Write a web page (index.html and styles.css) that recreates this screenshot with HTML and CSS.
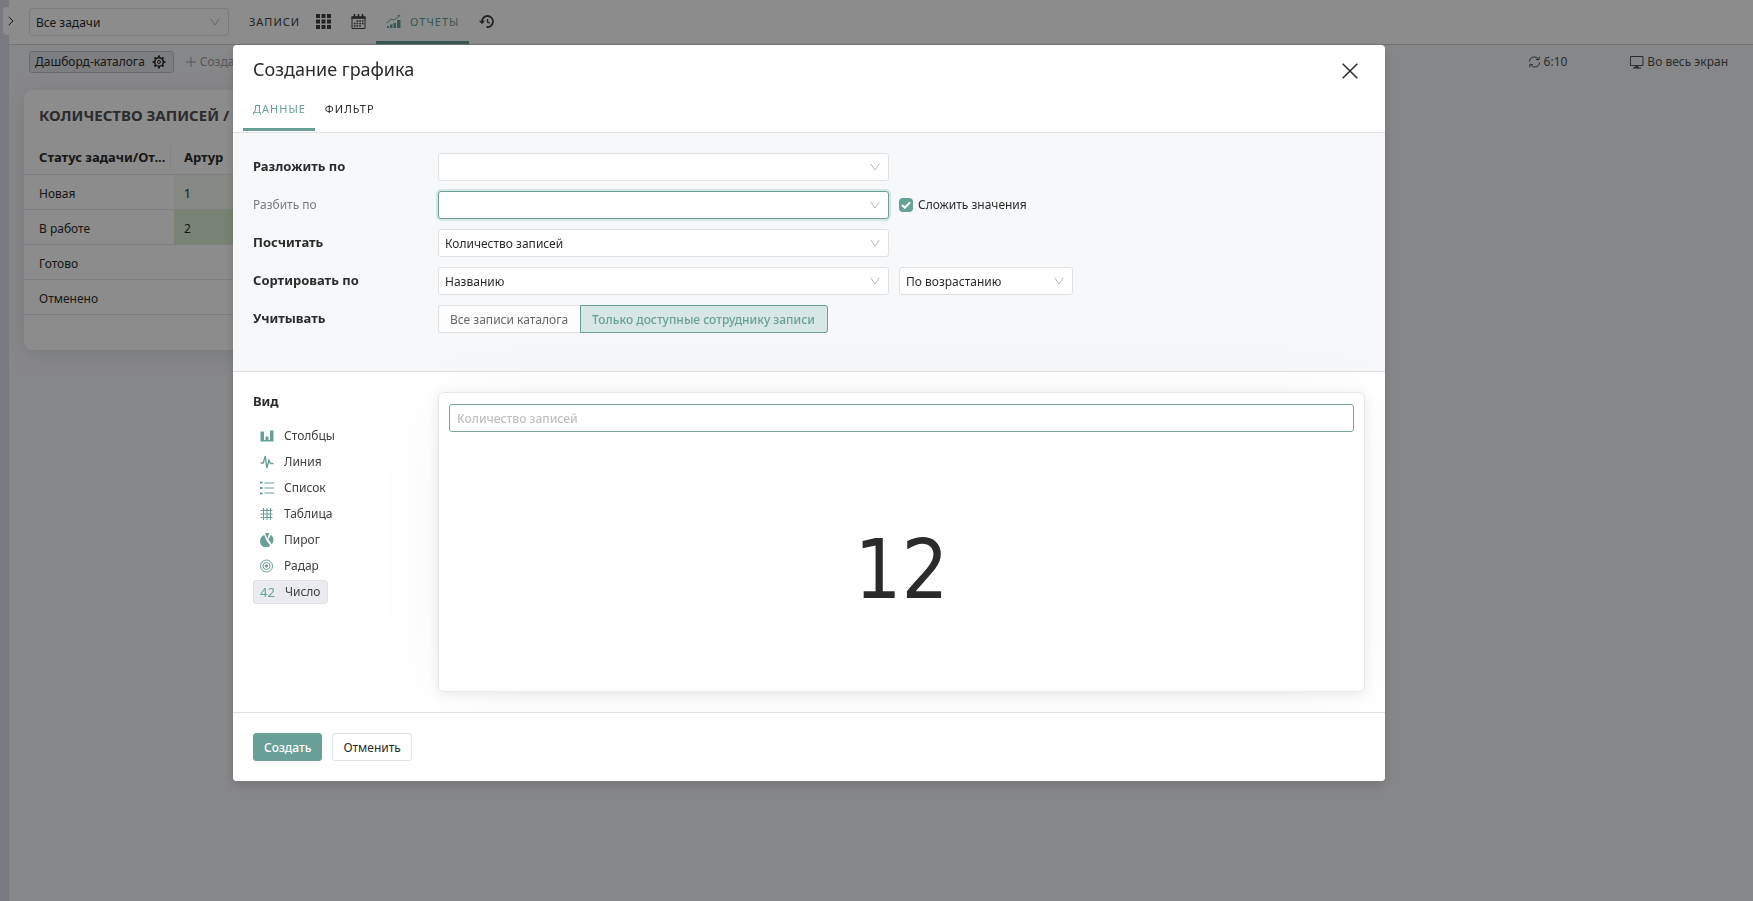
FILE: index.html
```html
<!DOCTYPE html>
<html lang="ru">
<head>
<meta charset="utf-8">
<title>Создание графика</title>
<link rel="stylesheet" href="styles.css">
</head>
<body>
<svg class="symbols" aria-hidden="true">
  <symbol id="chevron" viewBox="0 0 10 8"><path d="M.7 .8 5 7 9.300 .8" fill="none" stroke="currentColor"/></symbol>
</svg>
<div class="app">
  <div class="rail"></div>
  <button class="expand" aria-label="Развернуть"><svg width="6" height="10" viewBox="0 0 6 10"><path d="M.7 .8 5 5 .7 9.200" fill="none" stroke="currentColor"/></svg></button>
  <div class="page">
    <header class="topbar">
      <div class="select view-select">
        <select aria-label="Представление"><option>Все задачи</option></select>
        <svg class="chevron"><use href="#chevron"/></svg>
      </div>
      <nav class="nav">
        <a href="#" class="nav-item text">ЗАПИСИ</a>
        <a href="#" class="nav-item" aria-label="Плитка"><svg width="15" height="15" viewBox="0 0 15 15" fill="currentColor"><path d="M0 0h4v4H0zM5.500 0h4v4h-4zM11 0h4v4h-4zM0 5.500h4v4H0zM5.500 5.500h4v4h-4zM11 5.500h4v4h-4zM0 11h4v4H0zM5.500 11h4v4h-4zM11 11h4v4h-4z"/></svg></a>
        <a href="#" class="nav-item" aria-label="Календарь"><svg width="15" height="15" viewBox="0 0 15 15" fill="none" stroke="currentColor"><path d="M1 3v11.500h13V3"/><path d="M.5 3.500h14" stroke-width="2.600"/><path d="M3.500 0v4M7.500 0v4M11.500 0v4" stroke-width="1.500"/><path d="M5.500 7h7M2.800 9.500h10M2.800 12h7.500" stroke-width="1.500" stroke-dasharray="1.700 1"/></svg></a>
        <a href="#" class="nav-item active"><svg width="16" height="13" viewBox="0 0 16 13"><path d="M1 13v-2h2v2zM4 13V9.500h2.500V13zM7.500 13V8H10v5zM11 13V5h3.500v8z" fill="currentColor"/><path d="M.5 8 5 4l3 1L14 .7M11.500.6H14.200" fill="none" stroke="currentColor" stroke-width=".9"/></svg><span>ОТЧЕТЫ</span></a>
        <a href="#" class="nav-item" aria-label="История"><svg width="15" height="13" viewBox="0 0 15 13" fill="none" stroke="currentColor"><path d="M3 7.300V6.500a5.500 5.500 0 1 1 4.500 5.400" stroke-width="1.800"/><path d="M0 5.800h6L3 9.200z" fill="currentColor" stroke="none"/><path d="M8.500 4v3l2.300 1.200" stroke-width="1.300"/></svg></a>
      </nav>
    </header>
    <div class="toolbar">
      <button class="dash-chip">Дашборд-каталога <svg width="14" height="14" viewBox="0 0 14 14" fill="none" stroke="currentColor"><circle cx="7" cy="7" r="4.300" stroke-width="1.600"/><circle cx="7" cy="7" r="1.500" stroke-width="1"/><path d="M7 .6v2M7 11.400v2M.6 7h2M11.400 7h2M2.500 2.500l1.300 1.300M10.200 10.200l1.300 1.300M11.500 2.500l-1.300 1.300M3.800 10.200l-1.300 1.300" stroke-width="2"/></svg></button>
      <button class="add-dash"><svg width="10" height="10" viewBox="0 0 10 10"><path d="M5 0v10M0 5h10" stroke="currentColor"/></svg>Создать</button>
      <button class="tool refresh"><svg width="13" height="12" viewBox="0 0 13 12" fill="none" stroke="currentColor"><path d="M1.300 5.500A5 5 0 0 1 10.500 3.200M11.700 6.500A5 5 0 0 1 2.500 8.800"/><path d="M11.500.8l-.6 3-3-.4M1.500 11.200l.6-3 3 .4"/></svg>6:10</button>
      <button class="tool"><svg width="14" height="13" viewBox="0 0 14 13" fill="none" stroke="currentColor"><path d="M.5.5h12.500v9H.5zM3 12h8"/><path d="M4.500 11.800 6.800 9.500 9 11.800z" fill="currentColor"/></svg>Во весь экран</button>
    </div>
    <section class="report">
      <h2>КОЛИЧЕСТВО ЗАПИСЕЙ /</h2>
      <table>
        <thead><tr><th><span>Статус задачи/От...</span></th><th>Артур</th></tr></thead>
        <tbody>
          <tr><td>Новая</td><td class="low">1</td></tr>
          <tr><td>В работе</td><td class="high">2</td></tr>
          <tr><td>Готово</td><td></td></tr>
          <tr><td>Отменено</td><td></td></tr>
        </tbody>
      </table>
    </section>
  </div>
</div>

<div class="overlay">
  <div class="modal" role="dialog" aria-modal="true" aria-labelledby="title">
    <header class="modal-head">
      <div class="title-row">
        <h1 id="title">Создание графика</h1>
        <button class="close" aria-label="Закрыть"><svg width="16" height="16" viewBox="0 0 16 16"><path d="M.7.7l14.600 14.600M15.300.7.7 15.300" stroke="currentColor" stroke-width="1.500"/></svg></button>
      </div>
      <nav class="tabs">
        <button class="tab active">ДАННЫЕ</button>
        <button class="tab">ФИЛЬТР</button>
      </nav>
    </header>

    <form class="settings">
      <label class="name" for="split">Разложить по</label>
      <div class="field">
        <div class="select wide"><select id="split"><option></option></select><svg class="chevron"><use href="#chevron"/></svg></div>
      </div>
      <label class="name optional" for="group">Разбить по</label>
      <div class="field">
        <div class="select wide focused"><select id="group"><option></option></select><svg class="chevron"><use href="#chevron"/></svg></div>
        <label class="check"><span class="box"><input type="checkbox" checked><svg width="10" height="8" viewBox="0 0 10 8"><path d="M1 4l2.800 2.700L9 1.200" fill="none" stroke="#fff" stroke-width="2"/></svg></span>Сложить значения</label>
      </div>
      <label class="name" for="count">Посчитать</label>
      <div class="field">
        <div class="select wide"><select id="count"><option>Количество записей</option></select><svg class="chevron"><use href="#chevron"/></svg></div>
      </div>
      <label class="name" for="sort">Сортировать по</label>
      <div class="field">
        <div class="select wide"><select id="sort"><option>Названию</option></select><svg class="chevron"><use href="#chevron"/></svg></div>
        <div class="select order"><select aria-label="Порядок"><option>По возрастанию</option></select><svg class="chevron"><use href="#chevron"/></svg></div>
      </div>
      <span class="name" id="scope">Учитывать</span>
      <div class="field segmented" role="group" aria-labelledby="scope">
        <button type="button">Все записи каталога</button><button type="button" class="on" aria-pressed="true">Только доступные сотруднику записи</button>
      </div>
    </form>

    <div class="visual">
      <div class="kinds">
        <h3>Вид</h3>
        <button class="kind"><svg viewBox="0 0 14 14"><path d="M.5 12.500V2.500H4V11h1.500V7.500h3V11H10V1.500h3.500v11z" fill="currentColor"/></svg>Столбцы</button>
        <button class="kind"><svg viewBox="0 0 14 14"><path d="M.5 8h2.700L5.300 1 6.800 13 9 5l1.500 3.500H13.500" fill="none" stroke="currentColor" stroke-width="1.400"/></svg>Линия</button>
        <button class="kind"><svg viewBox="0 0 14 14"><path d="M0 1.500h2.500M0 7h2.500M0 12.500h2.500" stroke="currentColor" stroke-width="2"/><path d="M4.500 2H14M4.500 7H14M4.500 12H14" stroke="currentColor"/></svg>Список</button>
        <button class="kind"><svg viewBox="0 0 14 14"><path d="M3.500 1v12M7 1v12M10.500 1v12M.5 3.500h12M.5 7h12M.5 10.500h12" stroke="currentColor"/></svg>Таблица</button>
        <button class="kind"><svg viewBox="0 0 14 14" fill="currentColor"><path d="M4.200 2 6.500 7.500 10.300 12.500A6 6 0 0 1 0 8.500C0 5.500 1.500 3 4.200 2z"/><path d="M5 .3A7 7 0 0 1 9.200.3L7.300 5.500z"/><path d="M11 1.700A7 7 0 0 1 11.800 11.500L8.300 6.500z"/></svg>Пирог</button>
        <button class="kind"><svg viewBox="0 0 14 14" fill="none" stroke="currentColor"><circle cx="6.500" cy="7" r="6"/><circle cx="6.500" cy="7" r="3.500"/><circle cx="6.500" cy="7" r="1.200" fill="currentColor"/></svg>Радар</button>
        <button class="kind on"><span class="num">42</span>Число</button>
      </div>
      <section class="preview">
        <input type="text" aria-label="Название" placeholder="Количество записей">
        <div class="value">12</div>
      </section>
    </div>

    <footer class="modal-foot">
      <button class="btn primary">Создать</button>
      <button class="btn">Отменить</button>
    </footer>
  </div>
</div>
</body>
</html>
```
FILE: styles.css
```css
* { box-sizing: border-box; }
body, h1, h2, h3 { margin: 0; }
body {
  font: 12px/20px "Noto Sans", "Open Sans", sans-serif;
  color: #2b2b2b;
}
button, input, select { font: inherit; color: inherit; margin: 0; }
button { background: none; border: 0; padding: 0; cursor: pointer; }
a { color: inherit; text-decoration: none; }
svg { flex: none; }
.symbols { display: none; }

/* Page behind the dialog */
.app { display: flex; min-height: 100vh; background: #f5f6f9; position: relative; }
.rail { width: 9px; background: #dcdfe8; }
.expand {
  position: absolute; left: 3px; top: 7px; width: 16px; height: 28px;
  background: #fff; border-radius: 4px 0 0 4px;
  display: flex; align-items: center; justify-content: center;
}
.page { flex: 1; min-width: 0; }
.topbar {
  display: flex; align-items: center; height: 45px; padding-left: 20px;
  background: #fff; border-bottom: 1px solid #d5d5dc;
}
.view-select select { padding-top: 0; }
.nav { display: flex; align-self: stretch; padding-left: 10px; }
.nav-item {
  display: flex; align-items: center; gap: 8px; padding: 2px 10px 0;
  font-size: 11px; letter-spacing: 1px; border-bottom: 3px solid transparent; color: #404040;
}
.nav-item.text { padding-right: 6px; }
.nav-item.active { color: #68a097; border-color: #68a097; }

.select { display: grid; align-items: center; }
.select select, .select .chevron { grid-area: 1 / 1; }
.select select {
  appearance: none; width: 100%; height: 28px; padding: 1px 24px 0 6px;
  background: #fff; border: 1px solid #dfe2e5; border-radius: 3px; outline: 0;
}
.chevron { width: 10px; height: 8px; margin-right: 9px; justify-self: end; color: #b5b8bb; pointer-events: none; }
.view-select { width: 200px; }
.wide { width: 451px; }
.order { width: 174px; }
.focused select { border-color: #6f9f99; box-shadow: 0 0 0 2px #d5e6e4; }

.toolbar { display: flex; align-items: center; height: 34px; padding: 0 25px 0 20px; }
.dash-chip {
  display: flex; align-items: center; gap: 7px; height: 22px; padding: 0 7px 0 5px;
  background: #e4e6ec; border: 1px solid #bfc2c8; border-radius: 3px;
}
.add-dash { display: flex; align-items: center; gap: 4px; margin-left: 12px; color: #a0a0a4; }
.tool { display: flex; align-items: center; gap: 3px; color: #505050; }
.refresh { margin: 0 63px 0 auto; }

.report {
  width: 560px; margin: 11px 0 0 15px; padding-bottom: 35px; background: #fff;
  border-radius: 8px; box-shadow: 0 4px 24px rgba(40, 50, 70, .12);
}
.report h2 { padding: 14px 15px 10px; font-size: 15px; line-height: 22px; color: #505050; }
.report table { width: 100%; border-collapse: collapse; table-layout: fixed; }
.report th, .report td { height: 35px; padding: 4px 10px 0; text-align: left; border-bottom: 1px solid #e6e8ea; }
.report th { font-size: 13px; height: 38px; }
.report th:first-child { width: 150px; padding-right: 0; white-space: nowrap; }
.report th:first-child span { display: block; border-right: 1px solid #eee; margin-right: 3px; }
.report th:first-child, .report td:first-child { padding-left: 15px; }
.report .low { background: #f5f7ee; }
.report .high { background: #dcefd2; }

/* Dialog */
.overlay {
  position: fixed; inset: 0; overflow: auto;
  padding: 45px 21% 45px 233px; background: rgba(0, 0, 0, .45);
}
.modal { background: #fff; border-radius: 4px; box-shadow: 0 4px 12px rgba(0, 0, 0, .15); overflow: hidden; }
.modal-head { border-bottom: 1px solid #dde1e4; }
.title-row { display: flex; justify-content: space-between; align-items: center; padding: 11px 27px 0 20px; }
.title-row h1 { font-size: 18px; line-height: 26px; font-weight: 400; }
.close { display: flex; padding-top: 4px; }
.tabs { display: flex; height: 50px; padding: 4px 10px 1px; }
.tab { padding: 3px 9px 0 10px; font-size: 11px; letter-spacing: 1px; border-bottom: 3px solid transparent; }
.tab.active { color: #68a097; border-color: #68a097; }

.settings {
  display: grid; grid-template-columns: 185px 1fr; row-gap: 10px;
  padding: 20px 20px 38px; background: #f6f8fa; border-bottom: 1px solid #dde0e3;
}
.name { font-size: 13px; font-weight: 700; line-height: 26px; }
.optional { font-weight: 400; font-size: 12px; line-height: 28px; color: #7a7d80; }
.field { display: flex; align-items: center; gap: 10px; height: 28px; }
.check { display: flex; align-items: center; gap: 5px; }
.box { display: grid; place-items: center; }
.box > * { grid-area: 1 / 1; }
.box input { appearance: none; width: 14px; height: 14px; border-radius: 4px; background: #68a097; }
.box svg { pointer-events: none; z-index: 1; }
.segmented { gap: 0; }
.segmented button {
  height: 28px; padding: 1px 12px 0 11px; color: #66696c; background: #fdfdfe;
  border: 1px solid #dfe2e5; border-right: 0; border-radius: 3px 0 0 3px;
}
.segmented .on { color: #68a097; background: #d6e7e5; border: 1px solid #68a097; border-radius: 0 3px 3px 0; font-weight: 500; }

.visual { display: flex; padding: 20px; }
.kinds { display: flex; flex-direction: column; align-items: flex-start; width: 185px; gap: 2px; }
.kinds h3 { font-size: 13px; line-height: 18px; margin-bottom: 12px; }
.kind { display: flex; align-items: center; gap: 10px; height: 24px; padding: 0 7px; border-radius: 3px; color: #404040; }
.kind svg { width: 14px; height: 14px; color: #68a097; }
.kind.on { background: #e9ebef; border: 1px solid #dfe1e6; padding: 0 6px; }
.num { font-size: 13px; color: #68a097; }
.preview {
  flex: 1; min-width: 0; min-height: 300px; padding: 11px 10px; display: flex; flex-direction: column;
  border: 1px solid #e8e8e8; border-radius: 6px; box-shadow: 0 2px 12px rgba(0, 0, 0, .08), 0 4px 80px rgba(0, 0, 0, .04);
}
.preview input { width: 100%; height: 28px; padding: 0 7px; border: 1px solid #7aa79f; border-radius: 3px; outline: 0; background: #fff; }
.preview input::placeholder { color: #bfbfbf; opacity: 1; font-weight: 500; }
.value { flex: 1; padding-top: 28px; display: grid; place-items: center; font: 82px/1 "DejaVu Sans Condensed", "DejaVu Sans", sans-serif; }

.modal-foot { display: flex; gap: 10px; padding: 20px; border-top: 1px solid #dfe2e4; position: relative; background: #fff; }
.btn { height: 28px; padding: 1px 10px 0; border: 1px solid #dfe2e4; border-radius: 3px; background: #fff; }
.primary { color: #fff; font-weight: 500; background: #68a097; border-color: #68a097; }
```
